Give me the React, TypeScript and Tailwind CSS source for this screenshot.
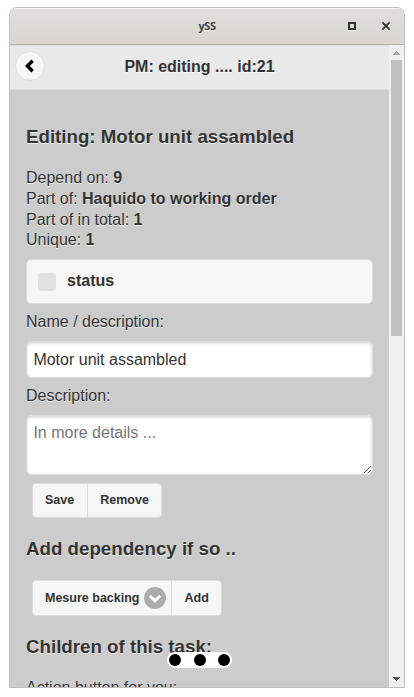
import type { ReactNode } from "react";

function Heading({ children, className = "" }: { children: ReactNode; className?: string }) {
  return <h3 className={`text-[18.72px] leading-[24.3px] font-bold ${className}`}>{children}</h3>;
}

function TitleBar() {
  return (
    <div className="flex h-[37px] shrink-0 items-center border-b border-[#bab5ac] bg-linear-to-b from-[#e1dedb] to-[#dad6d1] shadow-[inset_0_1px_#f6f5f4]">
      <div className="w-[70px]" />
      <div className="flex-1 text-center font-['Open_Sans',sans-serif] text-[11px] font-bold tracking-[-0.4px] text-[#3b4045] [text-shadow:0_1px_0_#eee]">ySS</div>
      <div className="flex w-[70px] items-center gap-[25px] pl-[14px]">
        <div className="h-2 w-2 border-2 border-[#2e3436] shadow-[0_1px_#fff]" />
        <svg width="10" height="10" viewBox="0 0 10 10" fill="none" strokeWidth="2">
          <path d="M1.2 2.2 8.8 9.8M8.8 2.2 1.2 9.8" stroke="#fff" />
          <path d="M1.4 1.4 8.6 8.6M8.6 1.4 1.4 8.6" stroke="#2e3436" />
        </svg>
      </div>
    </div>
  );
}

function Scrollbar() {
  return (
    <div className="flex w-[15px] shrink-0 flex-col items-center bg-[#f0f0f0]">
      <svg width="15" height="15" shapeRendering="crispEdges">
        <path d="M4 10h7L7.5 6z" fill="#a3a3a3" />
      </svg>
      <div className="h-[276px] w-[11px] bg-[#c1c1c1]" />
      <div className="flex-1" />
      <svg width="15" height="15" shapeRendering="crispEdges">
        <path d="M4 5h7L7.5 9z" fill="#505050" />
      </svg>
    </div>
  );
}

function PageHeader() {
  return (
    <header className="flex h-[45px] shrink-0 items-center border-b border-[#ddd] bg-[#e9e9e9] px-[5px] pb-[2px] shadow-[inset_0_1px_#dedede]">
      <button className="flex h-[30px] w-[30px] items-center justify-center rounded-full border border-[#ddd] bg-[#f6f6f6]">
        <svg width="14" height="14" viewBox="0 0 14 14">
          <path d="M9.7 1.7 4.4 7l5.3 5.3" fill="none" stroke="#000" strokeWidth="3.4" />
        </svg>
      </button>
      <h1 className="flex-1 pt-px pr-[30px] text-center text-base leading-[21px] font-bold">PM: editing .... id:21</h1>
    </header>
  );
}

const inputClass =
  "block w-full rounded-[5px] border border-[#ddd] bg-white text-base leading-[22px] outline-none shadow-[inset_0_1px_3px_rgba(0,0,0,0.2)] [text-shadow:none]";

export default function App() {
  return (
    <div className="h-[697px] w-[414px] overflow-hidden bg-white pt-[7px] pl-[9px] font-['Liberation_Sans',Arial,sans-serif] text-[#333]">
      <div className="flex h-[681px] w-[396px] flex-col overflow-hidden rounded-t-[8px] border border-[#bfbfbf]">
        <TitleBar />
        <div className="flex min-h-0 flex-1 [text-shadow:0_1px_0_#f3f3f3]">
          <div className="relative flex min-w-0 flex-1 flex-col overflow-hidden bg-[#ccc]">
            <PageHeader />
            <main className="px-4 pt-[35px] text-base leading-[20.8px]">
              <Heading>Editing: Motor unit assambled</Heading>
              <div className="mt-[18.7px]">
                <p>Depend on: <b>9</b></p>
                <p>Part of: <b>Haquido to working order</b></p>
                <p>Part of in total: <b>1</b></p>
                <p>Unique: <b>1</b></p>
              </div>
              <div className="mt-[8.3px] flex h-[45px] items-center gap-[11px] rounded-[5px] border border-[#ddd] bg-[#f6f6f6] pl-[11px]">
                <span className="h-[18px] w-[18px] rounded-[3px] bg-[#e1e1e1]" />
                <b className="-mt-[1px]">status</b>
              </div>
              <label className="mt-2 block">Name / description:</label>
              <input className={`mt-2 h-[37px] px-[6.4px] ${inputClass}`} defaultValue="Motor unit assambled" />
              <label className="mt-2 block">Description:</label>
              <textarea
                className={`mt-2 h-[60px] resize px-[6.4px] py-[6px] placeholder:text-[#757575] ${inputClass}`}
                placeholder="In more details ..."
              />
              <div className="mt-2 ml-1.5 flex h-[35px] w-fit overflow-hidden rounded-[4px] border border-[#ddd] bg-[#f6f6f6] text-[12.5px] font-bold">
                <button className="border-r border-[#ddd] pr-[13px] pl-3">Save</button>
                <button className="px-3">Remove</button>
              </div>
              <Heading className="mt-[19px]">Add dependency if so ..</Heading>
              <div className="mt-[19px] ml-1.5 flex h-9 w-fit overflow-hidden rounded-[4px] border border-[#ddd] bg-[#f6f6f6] text-[12.5px] font-bold">
                <button className="flex items-center gap-[5px] border-r border-[#ddd] pr-[5px] pl-3">
                  Mesure backing
                  <svg width="22" height="22" viewBox="0 0 22 22">
                    <circle cx="11" cy="11" r="11" fill="#acacac" />
                    <path d="M5.8 8.7 11 13.9l5.2-5.2" fill="none" stroke="#fff" strokeWidth="3" />
                  </svg>
                </button>
                <button className="px-3">Add</button>
              </div>
              <Heading className="mt-[19px]">Children of this task:</Heading>
              <p className="mt-[18px]">Action button for you:</p>
            </main>
            <div className="absolute top-[607px] left-[157px] flex h-4 w-[65px] items-center justify-between rounded-full bg-white px-[2px]">
              <span className="h-[12px] w-[12px] rounded-full bg-black" />
              <span className="h-[12px] w-[12px] rounded-full bg-black" />
              <span className="h-[12px] w-[12px] rounded-full bg-black" />
            </div>
          </div>
          <Scrollbar />
        </div>
      </div>
    </div>
  );
}
